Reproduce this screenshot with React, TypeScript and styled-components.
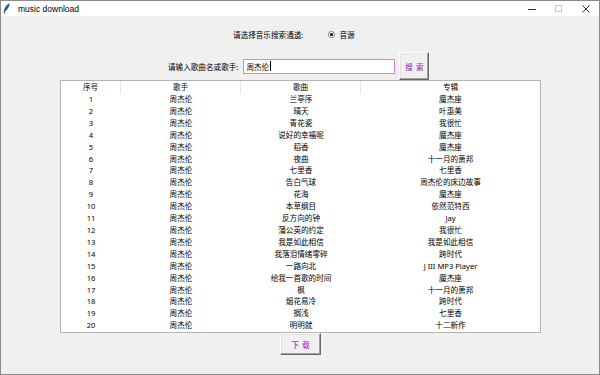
import React from "react";
import styled, { createGlobalStyle } from "styled-components";

const Global = createGlobalStyle`
  html, body { margin: 0; padding: 0; background: #f0f0f0; }
  body { width: 600px; height: 375px; overflow: hidden; }
`;

const Window = styled.div`
  box-sizing: border-box;
  width: 600px;
  height: 375px;
  border: 1px solid #8c8c8c;
  background: #f0f0f0;
  display: flex;
  flex-direction: column;
  font-family: "Noto Sans", "Noto Sans CJK SC", sans-serif;
  color: #000;
`;

const TitleBar = styled.div`
  height: 15px;
  background: #ffffff;
  display: flex;
  align-items: center;
  padding-left: 2px;
  gap: 8px;
`;

const Title = styled.span`
  font-family: "Liberation Sans", sans-serif;
  font-size: 8.5px;
  color: #000;
  flex: 1;
`;

const Controls = styled.div`
  display: flex;
  align-items: center;
  height: 100%;
`;

const Ctl = styled.div`
  width: 27px;
  height: 100%;
  display: flex;
  align-items: center;
  justify-content: center;
`;

const Body = styled.div`
  flex: 1;
  display: flex;
  flex-direction: column;
  padding-top: 11px;
  font-size: 7.6px;
`;

const ChannelRow = styled.div`
  display: flex;
  align-items: center;
  height: 14px;
  padding-left: 232px;
`;

const Label = styled.span`
  white-space: nowrap;
  font-size: 7.6px;
`;

const Radio = styled.span`
  margin-left: 25px;
  display: inline-flex;
  align-items: center;
  gap: 4px;
`;

const RadioDot = styled.span`
  box-sizing: border-box;
  width: 7px;
  height: 7px;
  border-radius: 50%;
  border: 1px solid #7a7a7a;
  background: #fff;
  display: inline-flex;
  align-items: center;
  justify-content: center;
  &::after {
    content: "";
    width: 3px;
    height: 3px;
    border-radius: 50%;
    background: #000;
  }
`;

const SearchRow = styled.div`
  margin-top: 11px;
  display: flex;
  align-items: center;
  height: 28px;
  padding-left: 167px;
`;

const Entry = styled.div`
  box-sizing: border-box;
  margin-left: 5px;
  width: 152px;
  height: 15px;
  border: 1px solid #e27fe6;
  background: #fff;
  display: flex;
  align-items: center;
  padding-left: 2px;
  font-size: 7.6px;
`;

const Caret = styled.span`
  display: inline-block;
  width: 1px;
  height: 10px;
  background: #000;
  margin-left: 1px;
`;

const Button = styled.div<{ $w: number; $h: number }>`
  box-sizing: border-box;
  width: ${(p) => p.$w}px;
  height: ${(p) => p.$h}px;
  background: #f0f0f0;
  border-style: solid;
  border-width: 1px;
  border-color: #ffffff #696969 #696969 #ffffff;
  box-shadow: inset -1px -1px 0 #a0a0a0, inset 1px 1px 0 #e3e3e3;
  display: flex;
  align-items: center;
  justify-content: center;
  color: #9c3fb4;
  font-family: "Noto Sans CJK SC", serif;
  font-size: 7.6px;
  font-weight: 500;
  letter-spacing: 3px;
  padding-left: 3px;
`;

const SearchButton = styled(Button)`
  margin-left: 4px;
`;

const Table = styled.div`
  box-sizing: border-box;
  margin-left: 59px;
  width: 481px;
  height: 253px;
  background: #fff;
  border: 1px solid #b4b4b4;
  display: flex;
  flex-direction: column;
`;

const Row = styled.div<{ $head?: boolean }>`
  display: grid;
  grid-template-columns: 60px 120px 120px 179px;
  height: ${(p) => (p.$head ? 13 : 12)}px;
  align-items: center;
  font-size: 7.6px;
  line-height: 1;
`;

const Cell = styled.div<{ $sep?: boolean }>`
  text-align: center;
  white-space: nowrap;
  height: 100%;
  display: flex;
  align-items: center;
  justify-content: center;
  border-right: ${(p) => (p.$sep ? "1px solid #e5e5e5" : "none")};
`;

const Footer = styled.div`
  display: flex;
  padding-left: 279px;
`;

const rows: [string, string][] = [
  ["兰亭序", "魔杰座"],
  ["晴天", "叶惠美"],
  ["青花瓷", "我很忙"],
  ["说好的幸福呢", "魔杰座"],
  ["稻香", "魔杰座"],
  ["夜曲", "十一月的萧邦"],
  ["七里香", "七里香"],
  ["告白气球", "周杰伦的床边故事"],
  ["花海", "魔杰座"],
  ["本草纲目", "依然范特西"],
  ["反方向的钟", "Jay"],
  ["蒲公英的约定", "我很忙"],
  ["我是如此相信", "我是如此相信"],
  ["我落泪情绪零碎", "跨时代"],
  ["一路向北", "J III MP3 Player"],
  ["给我一首歌的时间", "魔杰座"],
  ["枫", "十一月的萧邦"],
  ["烟花易冷", "跨时代"],
  ["搁浅", "七里香"],
  ["明明就", "十二新作"],
];

const Feather = () => (
  <svg width="7" height="11" viewBox="0 0 7 11">
    <path d="M6.8 0.3 C3.8 1.2 1.6 4 1 7.6 L0.6 10.6 L1.8 10.6 L2.2 8.2 C4.8 6.6 6.4 3.6 6.8 0.3 Z" fill="#1f5fa8" />
  </svg>
);

export default function App() {
  return (
    <>
      <Global />
      <Window>
        <TitleBar>
          <Feather />
          <Title>music download</Title>
          <Controls>
            <Ctl>
              <svg width="8" height="8" viewBox="0 0 8 8"><path d="M0 4.5 H8" stroke="#333" strokeWidth="1" /></svg>
            </Ctl>
            <Ctl>
              <svg width="7" height="7" viewBox="0 0 7 7"><rect x="0.5" y="0.5" width="6" height="6" fill="none" stroke="#c8c8c8" /></svg>
            </Ctl>
            <Ctl>
              <svg width="8" height="8" viewBox="0 0 8 8"><path d="M0.5 0.5 L7.5 7.5 M7.5 0.5 L0.5 7.5" stroke="#333" strokeWidth="1" /></svg>
            </Ctl>
          </Controls>
        </TitleBar>
        <Body>
          <ChannelRow>
            <Label>请选择音乐搜索通道:</Label>
            <Radio>
              <RadioDot />
              <Label>音源</Label>
            </Radio>
          </ChannelRow>
          <SearchRow>
            <Label>请输入歌曲名或歌手:</Label>
            <Entry>
              周杰伦
              <Caret />
            </Entry>
            <SearchButton $w={30} $h={28}>搜索</SearchButton>
          </SearchRow>
          <Table>
            <Row $head>
              <Cell $sep>序号</Cell>
              <Cell $sep>歌手</Cell>
              <Cell $sep>歌曲</Cell>
              <Cell>专辑</Cell>
            </Row>
            {rows.map((r, i) => (
              <Row key={i}>
                <Cell>{i + 1}</Cell>
                <Cell>周杰伦</Cell>
                <Cell>{r[0]}</Cell>
                <Cell>{r[1]}</Cell>
              </Row>
            ))}
          </Table>
          <Footer>
            <Button $w={41} $h={22}>下载</Button>
          </Footer>
        </Body>
      </Window>
    </>
  );
}
